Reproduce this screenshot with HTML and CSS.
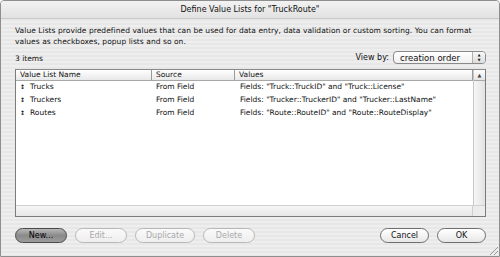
FILE: index.html
```html
<!DOCTYPE html>
<html lang="en">
<head>
    <meta charset="UTF-8">
    <title>Define Value Lists</title>
    <link rel="stylesheet" href="styles.css">
</head>
<body>
    <div class="window">
        <div class="titlebar">Define Value Lists for "TruckRoute"</div>
        <div class="content">
            <p class="desc">Value Lists provide predefined values that can be used for data entry, data validation or custom sorting. You can format values as checkboxes, popup lists and so on.</p>
            <div class="toolbar">
                <span class="count">3 items</span>
                <span class="viewby">View by:
                    <span class="popup">creation order<span class="popup-arrows">&#9650;<br>&#9660;</span></span>
                </span>
            </div>
            <div class="table">
                <div class="table-body">
                    <div class="grid">
                        <div class="head">
                            <div class="cell c-name">Value List Name</div>
                            <div class="cell c-source">Source</div>
                            <div class="cell c-values">Values</div>
                        </div>
                        <div class="row">
                            <div class="cell c-name"><span class="grip">&#8597;</span>Trucks</div>
                            <div class="cell c-source">From Field</div>
                            <div class="cell c-values">Fields: "Truck::TruckID" and "Truck::License"</div>
                        </div>
                        <div class="row">
                            <div class="cell c-name"><span class="grip">&#8597;</span>Truckers</div>
                            <div class="cell c-source">From Field</div>
                            <div class="cell c-values">Fields: "Trucker::TruckerID" and "Trucker::LastName"</div>
                        </div>
                        <div class="row">
                            <div class="cell c-name"><span class="grip">&#8597;</span>Routes</div>
                            <div class="cell c-source">From Field</div>
                            <div class="cell c-values">Fields: "Route::RouteID" and "Route::RouteDisplay"</div>
                        </div>
                    </div>
                    <div class="vscroll">
                        <div class="vscroll-up">&#9650;</div>
                        <div class="vscroll-track"></div>
                    </div>
                </div>
                <div class="hscroll">
                    <div class="hscroll-track"></div>
                    <div class="corner"></div>
                </div>
            </div>
            <div class="buttons">
                <div class="group">
                    <button class="btn btn-default w-new">New...</button>
                    <button class="btn w-edit" disabled>Edit...</button>
                    <button class="btn w-dup" disabled>Duplicate</button>
                    <button class="btn w-del" disabled>Delete</button>
                </div>
                <div class="group">
                    <button class="btn w-ok">Cancel</button>
                    <button class="btn w-ok">OK</button>
                </div>
            </div>
        </div>
        <div class="resize"></div>
    </div>
</body>
</html>
```

FILE: styles.css
```css
body {
    margin: 0;
    font-family: "DejaVu Sans", sans-serif;
    font-size: 7.5px;
    color: #111;
}
.window {
    position: relative;
    width: 500px;
    height: 257px;
    box-sizing: border-box;
    border: 1px solid #8e8e8e;
    border-radius: 4px 4px 0 0;
    background: repeating-linear-gradient(#eeeeee 0, #eeeeee 2px, #e7e7e7 2px, #e7e7e7 4px);
    display: flex;
    flex-direction: column;
    overflow: hidden;
}
.titlebar {
    height: 17px;
    line-height: 17px;
    text-align: center;
    font-size: 8px;
    background: linear-gradient(#f2f2f2, #e2e2e2);
    border-bottom: 1px solid #c8c8c8;
}
.content {
    flex: 1;
    display: flex;
    flex-direction: column;
    padding: 6px 13px 0 14px;
}
.desc {
    margin: 0;
    line-height: 11px;
    letter-spacing: 0.05px;
}
.toolbar {
    display: flex;
    justify-content: space-between;
    align-items: flex-start;
    margin-top: 4px;
    height: 18px;
}
.count {
    line-height: 13px;
    padding-top: 1px;
}
.viewby {
    display: flex;
    align-items: center;
    font-size: 8px;
}
.popup {
    display: flex;
    align-items: center;
    justify-content: space-between;
    margin-left: 4px;
    width: 93px;
    height: 13px;
    box-sizing: border-box;
    padding-left: 6px;
    border: 1px solid #8a8a8a;
    border-radius: 4px;
    background: linear-gradient(#ffffff, #f0f0f0);
    font-size: 8.5px;
}
.popup-arrows {
    width: 13px;
    height: 11px;
    border-left: 1px solid #b0b0b0;
    background: linear-gradient(#f8f8f8, #dcdcdc);
    border-radius: 0 3px 3px 0;
    font-size: 3.5px;
    line-height: 4.5px;
    text-align: center;
    padding-top: 1px;
    box-sizing: border-box;
}
.table {
    display: flex;
    flex-direction: column;
    height: 148px;
    border: 1px solid #7b7b7b;
    border-top-color: #8a8a8a;
    background: #fff;
    box-sizing: border-box;
}
.table-body {
    flex: 1;
    display: flex;
}
.grid {
    flex: 1;
}
.head, .row {
    display: flex;
}
.head {
    height: 10px;
    line-height: 10px;
    background: linear-gradient(#ffffff, #e8e8e8);
    border-bottom: 1px solid #a8a8a8;
}
.head .cell {
    border-right: 1px solid #9a9a9a;
    box-sizing: border-box;
    padding-left: 4px;
}
.row {
    height: 13px;
    line-height: 12px;
}
.row .cell {
    padding-left: 4px;
    box-sizing: border-box;
}
.c-name {
    width: 136px;
}
.c-source {
    width: 83px;
}
.c-values {
    flex: 1;
}
.row .c-values {
    padding-left: 5px;
}
.grip {
    display: inline-block;
    width: 10px;
    font-size: 6px;
    font-weight: bold;
}
.vscroll {
    width: 11px;
    display: flex;
    flex-direction: column;
    border-left: 1px solid #c8c8c8;
}
.vscroll-up {
    height: 10px;
    line-height: 10px;
    text-align: center;
    font-size: 5px;
    color: #444;
    background: linear-gradient(#ffffff, #e4e4e4);
    border-bottom: 1px solid #a8a8a8;
}
.vscroll-track {
    flex: 1;
    background: linear-gradient(90deg, #f6f6f6, #e2e2e2);
}
.hscroll {
    height: 10px;
    display: flex;
    border-top: 1px solid #d0d0d0;
}
.hscroll-track {
    flex: 1;
    background: linear-gradient(#f6f6f6, #e6e6e6);
}
.corner {
    width: 12px;
    background: #ececec;
    border-left: 1px solid #d0d0d0;
}
.buttons {
    display: flex;
    justify-content: space-between;
    margin-top: 11px;
}
.group {
    display: flex;
    gap: 8px;
}
.btn {
    font-family: "DejaVu Sans", sans-serif;
    font-size: 8px;
    height: 15px;
    padding: 0;
    border: 1px solid #6f6f6f;
    border-radius: 8px;
    background: linear-gradient(#ffffff, #f4f4f4 50%, #e6e6e6);
    color: #111;
}
.w-new {
    width: 52px;
}
.w-edit {
    width: 52px;
}
.w-dup {
    width: 60px;
}
.w-del {
    width: 52px;
}
.w-ok {
    width: 49px;
}
.btn:disabled {
    color: #a8a8a8;
    border-color: #b8b8b8;
    background: linear-gradient(#fafafa, #eeeeee);
}
.btn-default {
    border-color: #4a4a4a;
    background: linear-gradient(#b8b8b8, #8a8a8a 50%, #9c9c9c);
    color: #000;
}
.resize {
    position: absolute;
    right: 1px;
    bottom: 1px;
    width: 10px;
    height: 10px;
    background: repeating-linear-gradient(135deg, transparent 0, transparent 2px, #9a9a9a 2px, #9a9a9a 3px);
    clip-path: polygon(100% 0, 100% 100%, 0 100%);
}
```
